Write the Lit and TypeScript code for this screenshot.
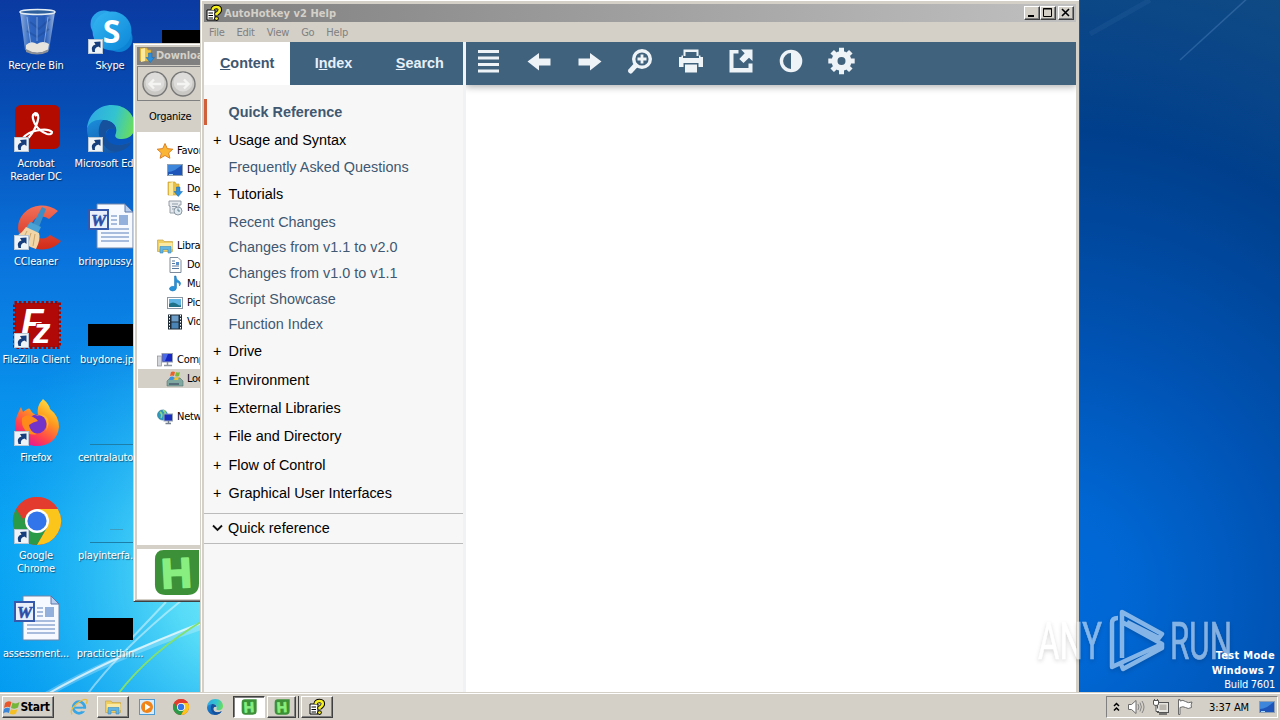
import { html, svg, css, LitElement, nothing } from 'lit'
import { customElement, property } from 'lit/decorators.js'
import { classMap } from 'lit/directives/class-map.js'

const shared = css`
  * {
    box-sizing: border-box;
  }

  svg {
    display: block;
    flex: none;
  }

  .ui {
    font-family: "DejaVu Sans Condensed", "DejaVu Sans", sans-serif;
    font-stretch: condensed;
    font-size: 11px;
    line-height: 13px;
    letter-spacing: -0.25px;
    white-space: nowrap;
  }
`

// ---------- icon artwork ----------

const ahk = svg`
  <path d="M11 1H47V35Q47 47 35 47H13Q2 47 2 36V11Q2 1 11 1Z" fill="#3c9038"/>
  <text x="24" y="39.5" text-anchor="middle" font-family="Liberation Sans, sans-serif" font-weight="bold"
    font-size="43" fill="#88ee80" stroke="#88ee80" stroke-width="2" stroke-linejoin="round" transform="rotate(-3 24 24)">H</text>`

const chrome = svg`
  <circle cx="24" cy="24" r="24" fill="#e33b2e"/>
  <path d="M3.2 12A24 24 0 0 0 24 48L34.4 30L24 24Z" fill="#2a9a48"/>
  <path d="M24 48A24 24 0 0 0 44.8 12H24L34.4 30Z" fill="#fcc51c"/>
  <path d="M3.2 12L13.6 30L24 24V12Z" fill="#e33b2e"/>
  <path d="M3.2 12L13.6 30L18 24L10 12Z" fill="#2a9a48"/>
  <path d="M3.2 12A24 24 0 0 1 44.8 12H24Q16 13 13 20L10 22Z" fill="#e33b2e"/>
  <circle cx="24" cy="24" r="12" fill="#fff"/>
  <circle cx="24" cy="24" r="9.6" fill="#3274ea"/>`

const edge = svg`
  <defs>
    <linearGradient id="eg" x1="0" y1="0.3" x2="1" y2="0.5">
      <stop offset="0" stop-color="#2fa9e4"/><stop offset=".55" stop-color="#32c3d0"/><stop offset="1" stop-color="#69dd5e"/>
    </linearGradient>
    <linearGradient id="eb" x1="0" y1="0" x2="0.6" y2="1">
      <stop offset="0" stop-color="#1b8fdc"/><stop offset="1" stop-color="#1456a8"/>
    </linearGradient>
  </defs>
  <path d="M0 24C1 10 11 0 25 0C40 0 48 11 48 21C48 30 41 34 35 34C29 34 27 32 29 28C31 20 24 15 16 15C8 15 2 19 0 24Z" fill="url(#eg)"/>
  <path d="M0 24C2 17 9 14 16 15C23 16 28 20 28 24C22 21 18 27 19 32C20 40 32 44 44 36C40 44 32 48 24 48C10 48 0 38 0 24Z" fill="url(#eb)"/>
  <path d="M16 15C9 22 10 38 24 46C36 48 42 42 44 37C32 43 20 40 19 31C18 25 22 22 28 24C28 18 22 15 16 15Z" fill="#15519c"/>`

const word = svg`
  <path d="M10 1H38L46 9V45H10Z" fill="#f6f9ff" stroke="#7386a8" stroke-width="1"/>
  <path d="M38 1V9H46Z" fill="#b9cdec" stroke="#5a76aa" stroke-width="1"/>
  <path d="M24 13H30M24 17H30M24 21H30M14 26H42M14 30H42M14 34H42M14 38H42" stroke="#8ea9d2" stroke-width="1.3"/>
  <rect x="32" y="12" width="9" height="10" fill="#93afdb"/>
  <rect x="2" y="7" width="19" height="19" fill="#e9f0fc" stroke="#3659ab" stroke-width="2"/>
  <text x="11.500" y="22.500" text-anchor="middle" font-family="Liberation Serif, serif" font-weight="bold"
    font-style="italic" font-size="17" fill="#2c4fa6" stroke="#2c4fa6" stroke-width=".6">W</text>`

const help = svg`
  <path d="M1 5H9V15H1Z" fill="#fff" stroke="#000"/>
  <path d="M2.500 8H7M2.500 10.500H7M2.500 13H7" stroke="#000"/>
  <path d="M6.500 5Q7 1.800 10.500 1.800Q14 2 14 4.800Q14 7 10.500 9V10.500" fill="none" stroke="#000" stroke-width="4.200"/>
  <circle cx="10.500" cy="13.600" r="2.300" fill="#000"/>
  <path d="M6.500 5Q7 2 10.500 2Q13.800 2 13.800 4.800Q13.800 7 10.500 8.800V10.300" fill="none" stroke="#f6f01c" stroke-width="2.500"/>
  <circle cx="10.500" cy="13.600" r="1.400" fill="#f6f01c"/>`

const folder = svg`
  <path d="M1 1H8L9 3H12V14H1Z" fill="#e9bf45" stroke="#c39a2e" stroke-width=".6"/>
  <path d="M2 2L6 1V14L2 15Z" fill="#fbe9a0"/>`

const downloads = svg`${folder}
  <path d="M9.500 6H13V10.500H15.500L11.300 15.500L7 10.500H9.500Z" fill="#2b8fe0" stroke="#1566b4" stroke-width=".5"/>`

const library = svg`
  <path d="M.5 2H6L7 3.500H15.500V13.500H.5Z" fill="#f0cf62" stroke="#c8a347" stroke-width=".7"/>
  <path d="M2 5H15.500V11H2Z" fill="#f9e9a4"/>
  <path d="M3 15V8.500H14V15H11V11.500H6V15Z" fill="#63b4e0" stroke="#3b8cc0" stroke-width=".6"/>`

const monitor = svg`
  <rect x=".5" y="2.500" width="15" height="11" fill="#1d55b8" stroke="#8fa0b4"/>
  <path d="M1 3H15L8 8Q4 10 1 10Z" fill="#3d86dc"/>
  <path d="M2 12.500H6" stroke="#a9d8ff"/>`

const glyphs: Record<string, unknown> = {
  ahk,
  chrome,
  edge,
  word,
  help,
  downloads,
  library,
  monitor,
  recycle: svg`
    <defs>
      <linearGradient id="rb" x1="0" x2="1" y1="0" y2="0">
        <stop offset="0" stop-color="#b8cfe8" stop-opacity=".8"/><stop offset=".3" stop-color="#4f86d6" stop-opacity=".55"/>
        <stop offset=".7" stop-color="#3c70c4" stop-opacity=".55"/><stop offset="1" stop-color="#c4d8ee" stop-opacity=".8"/>
      </linearGradient>
    </defs>
    <path d="M7 5L12 43Q24 49 36 43L42 5Z" fill="url(#rb)"/>
    <path d="M13 38Q18 33 24 37Q30 33 36 37L35 43Q24 49 13 43Z" fill="#e7e4de"/>
    <path d="M13 42Q24 49 36 42L35 45Q24 50 13 45Z" fill="#8b8f96"/>
    <path d="M17 15L26 22L37 12M14 24L24 30L36 22" stroke="#1c4a96" stroke-width="2" fill="none" opacity=".45"/>
    <path d="M14 10L18 38M24 10V34M35 10L31 38" stroke="#cfe0f4" stroke-width="1" opacity=".5"/>
    <ellipse cx="24.500" cy="5" rx="17.500" ry="2.500" fill="#2e5f9d" stroke="#e4ecf4" stroke-width="1.600"/>`,
  skype: svg`
    <defs>
      <linearGradient id="sk" x1="0" y1="0" x2="1" y2="1">
        <stop offset="0" stop-color="#36b6f2"/><stop offset="1" stop-color="#0b86d8"/>
      </linearGradient>
    </defs>
    <circle cx="17" cy="17" r="13.500" fill="#2aa5ea"/>
    <circle cx="32" cy="31.500" r="13.500" fill="#0c83d4"/>
    <circle cx="25" cy="24" r="19.500" fill="url(#sk)"/>
    <text x="24.500" y="35.500" text-anchor="middle" font-family="Open Sans, sans-serif" font-weight="bold"
      font-size="32" fill="#fff">S</text>`,
  acrobat: svg`
    <rect x="2" y="0" width="45" height="44" rx="6" fill="#b30b00"/>
    <path d="M23 11Q20 7 24 8.500Q27 11 23 21Q19 30 14 34Q8 38 10 33Q15 27 24 25.500Q35 23 39 27Q39 30 34 29Q26 26 22 19Q19 13 20 10Q22 7 24 11"
      fill="none" stroke="#fff" stroke-width="2.200"/>`,
  ccleaner: svg`
    <defs>
      <linearGradient id="cc" x1="0" y1="0" x2="0" y2="1">
        <stop offset="0" stop-color="#f2705a"/><stop offset="1" stop-color="#d12a18"/>
      </linearGradient>
    </defs>
    <path d="M45 8A24 22 0 1 0 48 38L37 32A11 11 0 1 1 36 16Z" fill="url(#cc)"/>
    <path d="M29 4L33 6L26 24L20 21Z" fill="#3c8fc6"/>
    <path d="M17 19L28 24L25 30L13 25Z" fill="#4aa3d4"/>
    <path d="M13 24L26 30Q28 36 23 46Q14 44 4 33Q9 30 13 24Z" fill="#f0d6a8"/>
    <path d="M14 28L10 36M18 30L15 40M22 31L20 43" stroke="#c9a468" stroke-width="1"/>`,
  filezilla: svg`
    <rect x="2" y="2" width="44" height="44" fill="#b00908"/>
    <rect x="1.500" y="1.500" width="45" height="45" fill="none" stroke="#9a0808" stroke-width="3" stroke-dasharray="2.500 2"/>
    <text x="8" y="34" font-family="Liberation Sans, sans-serif" font-weight="bold" font-style="italic"
      font-size="37" fill="#fff">F</text>
    <text x="20" y="42" font-family="Liberation Sans, sans-serif" font-weight="bold" font-style="italic"
      font-size="35" fill="#fff" stroke="#b00908" stroke-width="2" paint-order="stroke">z</text>`,
  firefox: svg`
    <defs>
      <linearGradient id="ff" x1="0.9" y1="0" x2="0.3" y2="1">
        <stop offset="0" stop-color="#fff04a"/><stop offset=".4" stop-color="#ff9a1e"/>
        <stop offset=".75" stop-color="#ff3f50"/><stop offset="1" stop-color="#e2159c"/>
      </linearGradient>
    </defs>
    <path d="M30 0Q36 5 37 10Q46 17 46 28C45 40 36 47 24 47C11 47 1 38 2 25Q3 17 8 8L10 13Q16 8 17 10Q19 15 25 17Q23 7 30 0Z" fill="url(#ff)"/>
    <circle cx="24" cy="25" r="9.500" fill="#7433c8"/>
    <path d="M9 19Q14 14 20 18Q24 20 25 22Q20 23 16 26Q17 33 24 35Q16 37 12 31Q8 26 9 19Z" fill="#ff8a1c"/>
    <path d="M22 17Q32 14 34 24Q35 30 31 34Q37 28 35 20Q31 13 22 17Z" fill="#ffb52e"/>`,
  black: svg`<rect x="1" y="23" width="45" height="22" fill="#000"/>`,
  line: svg`<path d="M3 45.500H48" stroke="#1d7fa8"/>`,
  lines: svg`<path d="M3 45.500H48" stroke="#1d7fa8"/><path d="M23 32.500H36" stroke="#3f9dc0"/>`,
  star: svg`<path d="M8 .5L10.300 5.600L15.800 6.200L11.700 9.900L12.900 15.300L8 12.500L3.100 15.300L4.300 9.900L.2 6.200L5.700 5.600Z" fill="#fbb535" stroke="#d9791b" stroke-width=".9"/>`,
  recent: svg`<path d="M2 1H14V5H12V13H3V6H2Z" fill="#e6eaee" stroke="#8a949e" stroke-width=".9"/>
    <path d="M5 4H11M5 6.500H10M5 9H10" stroke="#8d99a6"/><circle cx="11" cy="11" r="4" fill="#dfe9f0" stroke="#8c98a4"/>
    <path d="M11 8.500V11H13" stroke="#5d7f8e" fill="none"/>`,
  document: svg`<path d="M3 .5H11L14 3.500V15.500H3Z" fill="#fff" stroke="#7e8b9b"/>
    <path d="M5 4H8M5 6.500H8M5 9H12M5 11.500H12" stroke="#56789f"/><rect x="9" y="5" width="3" height="3" fill="#5b8fcb"/>`,
  music: svg`<path d="M9 0Q9 4 12 5Q15 7 12.500 10Q13 6.500 9.500 6V12Q9 15 5.500 15Q2 14.500 2.500 12Q4 9.500 7.500 10.500V0Z" fill="#2491d8" stroke="#1570b4" stroke-width=".5"/>`,
  picture: svg`<rect x=".5" y="2.500" width="15" height="11" fill="#fff" stroke="#8b97a5"/>
    <rect x="2" y="4" width="12" height="8" fill="#5fb4e4"/><path d="M2 9Q6 6 10 9T14 9V12H2Z" fill="#1f7287"/>`,
  video: svg`<rect x="1" y=".5" width="14" height="15" fill="#1f2c38"/>
    <path d="M2.500 1V15M13.500 1V15" stroke="#fff" stroke-dasharray="1.500 1.500"/>
    <rect x="4.500" y="1.500" width="7" height="6" fill="#6c9cc8"/><rect x="4.500" y="8.500" width="7" height="6" fill="#4a83b6"/>`,
  computer: svg`<rect x=".5" y="4" width="4" height="10" fill="#d3d6da" stroke="#8b8f96" stroke-width=".7"/>
    <rect x="5" y="1.500" width="10.500" height="8.500" fill="#1728c4" stroke="#98a2b2"/><path d="M6 2H11L8 9H6Z" fill="#4a6ae8"/>
    <path d="M7 13.500H15M10.500 10V13" stroke="#8d959f" stroke-width="1.500"/>`,
  disk: svg`<path d="M0 10L3 7H13L16 10V15H0Z" fill="#7fa9a0" stroke="#55726e" stroke-width=".6"/>
    <path d="M2 13H12" stroke="#335"/><path d="M4 1Q6 0 8 1L7 5Q5 4 3 5Z" fill="#e8622a"/>
    <path d="M9 1Q11 2 13 1L12 5Q10 6 8 5Z" fill="#7ab93a"/><path d="M3 6Q5 5 7 6L6 9H2Z" fill="#3c90e0"/>
    <path d="M8 6Q10 7 12 6L11 9H7Z" fill="#f4c42c"/>`,
  network: svg`<circle cx="5.500" cy="6" r="5" fill="#2f9ac0" stroke="#247295" stroke-width=".6"/>
    <path d="M3 3Q6 5 4 9M6 1Q9 3 8 6" stroke="#8fd67a" stroke-width="1.600" fill="none"/>
    <rect x="7" y="5" width="8.500" height="7" fill="#1a2fc0" stroke="#97a3b4"/><path d="M8.500 14.500H14M11.500 12V14" stroke="#76818f" stroke-width="1.400"/>`,
  ie: svg`<circle cx="8" cy="8.500" r="5.800" fill="none" stroke="#37a6e6" stroke-width="2.800"/>
    <path d="M3.500 8.700H14" stroke="#37a6e6" stroke-width="2"/><path d="M11 9.800H16V12.300H10.500Z" fill="#d4d0c8"/>
    <path d="M1 15.500Q-2 11.500 5.500 5Q13 -1 15.800 .8Q16.800 2 15 5" fill="none" stroke="#e9bd3c" stroke-width="1.300"/>`,
  wmp: svg`<rect x=".5" y=".5" width="15" height="15" fill="#d8ecfb" stroke="#4e9bd4"/>
    <circle cx="8" cy="8" r="6" fill="#f08418"/><path d="M6 4.500L11.500 8L6 11.500Z" fill="#fff"/>`,
  flag: svg`<path d="M1 4Q4 1 7.500 3L6 8.500Q3.500 7 0 9Z" fill="#e8562a"/><path d="M8.500 3.500Q12 5.500 15.500 3L14 8.500Q11 10.500 7 9Z" fill="#74b63a"/>
    <path d="M0 10Q3 8 6 9.500L5 14Q2 12.500 -1 14.500Z" fill="#3c86d8"/><path d="M7 10Q10 12 13.500 10L12 14.500Q9 16.500 5.500 14.500Z" fill="#f5bf26"/>`
}

@customElement('app-icon')
export class AppIcon extends LitElement {
  static styles = css`
    :host {
      display: block;
      flex: none;
    }

    svg {
      display: block;
      overflow: visible;
    }
  `

  @property() name = ''
  @property({ type: Number }) size = 16
  @property({ type: Number }) box = 16

  render () {
    return html`<svg width=${this.size} height=${this.size} viewBox="0 0 ${this.box} ${this.box}">${glyphs[this.name]}</svg>`
  }
}

// ---------- desktop shortcuts ----------

interface Shortcut {
  icon: string
  label: string
  link?: boolean
}

const shortcuts: Shortcut[] = [
  { icon: 'recycle', label: 'Recycle Bin' },
  { icon: 'acrobat', label: 'Acrobat\nReader DC', link: true },
  { icon: 'ccleaner', label: 'CCleaner', link: true },
  { icon: 'filezilla', label: 'FileZilla Client', link: true },
  { icon: 'firefox', label: 'Firefox', link: true },
  { icon: 'chrome', label: 'Google\nChrome', link: true },
  { icon: 'word', label: 'assessment...' },
  { icon: 'skype', label: 'Skype', link: true },
  { icon: 'edge', label: 'Microsoft Edge', link: true },
  { icon: 'word', label: 'bringpussy....' },
  { icon: 'black', label: 'buydone.jpg' },
  { icon: 'line', label: 'centralauto...' },
  { icon: 'lines', label: 'playinterfa....' },
  { icon: 'black', label: 'practicethin...' },
  { icon: 'black', label: '' }
]

@customElement('desktop-icon')
export class DesktopIcon extends LitElement {
  static styles = [shared, css`
    :host {
      display: flex;
      flex-direction: column;
      align-items: center;
    }

    .pic {
      position: relative;
      margin-left: 2px;
    }

    .arrow {
      position: absolute;
      left: 1px;
      bottom: 1px;
    }

    .label {
      margin-top: 4px;
      color: #fff;
      text-align: center;
      white-space: pre;
      letter-spacing: -0.15px;
      text-shadow: 1px 1px 1px rgb(0 0 0 / 50%);
    }
  `]

  @property({ attribute: false }) item!: Shortcut

  render () {
    const { icon, label, link } = this.item
    return html`
      <div class="pic">
        <app-icon name=${icon} size="48" box="48"></app-icon>
        ${link
          ? html`<svg class="arrow" width="15" height="15" viewBox="0 0 15 15">
              <rect x=".5" y=".5" width="14" height="14" fill="#eef3f8" stroke="#b9c6d4"/>
              <path d="M4.500 13Q2 7 7.500 5.500L6 3L12.500 2.500V9L10.500 7.500Q6 8.500 7 13Z" fill="#173e7c"/>
            </svg>`
          : nothing}
      </div>
      <div class="ui label">${label}</div>
    `
  }
}

// ---------- explorer window, mostly hidden behind the help window ----------

const places = [
  [['star', 'Favorites'], ['monitor', 'Desktop'], ['downloads', 'Downloads'], ['recent', 'Recent Places']],
  [['library', 'Libraries'], ['document', 'Documents'], ['music', 'Music'], ['picture', 'Pictures'], ['video', 'Videos']],
  [['computer', 'Computer'], ['disk', 'Local Disk (C:)']],
  [['network', 'Network']]
]

@customElement('explorer-window')
export class ExplorerWindow extends LitElement {
  static styles = [shared, css`
    :host {
      display: flex;
      flex-direction: column;
      overflow: hidden;
      background: #d4d0c8;
      border: 1px solid #d4d0c8;
      border-bottom-color: #404040;
      box-shadow: inset 1px 1px #fff, inset 0 -1px #808080;
      padding: 3px 0 2px 3px;
    }

    .title {
      display: flex;
      align-items: center;
      gap: 1px;
      height: 18px;
      padding: 0 0 2px 2px;
      background: #808080;
      color: #d4d0c8;
      font-weight: bold;
      letter-spacing: -0.1px;
    }

    .nav {
      display: flex;
      align-items: center;
      gap: 2px;
      height: 35px;
      margin-top: 1px;
      padding-left: 4px;
      border: 1px solid #808080;
      border-right: 0;
    }

    .organize {
      height: 31px;
      padding: 9px 12px;
    }

    .tree {
      height: 413px;
      padding-top: 9px;
      background: #fff;
    }

    .group {
      margin-bottom: 19px;
    }

    .row {
      display: flex;
      align-items: center;
      gap: 4px;
      height: 19px;
      padding-left: 30px;
    }

    .row:first-child {
      padding-left: 20px;
    }

    .row.selected {
      background: #d4d0c8;
      margin-left: 1px;
      padding-left: 29px;
    }

    .details {
      flex: 1;
      margin-top: 4px;
      padding: 0 0 0 16px;
      background: #fff;
    }
  `]

  arrow (flip: boolean) {
    return html`<svg width="26" height="26" viewBox="0 0 26 26">
      <circle cx="13" cy="13" r="12" fill="#c9c8c5" stroke="#777" stroke-width="1.4"/>
      <circle cx="13" cy="11" r="9.500" fill="#dddcda"/>
      <path d=${flip ? 'M7 13H18M14 8.500L18.500 13L14 17.500' : 'M19 13H8M12 8.500L7.500 13L12 17.500'} fill="none" stroke="#f4f4f2" stroke-width="2.400"/>
    </svg>`
  }

  render () {
    return html`
      <div class="ui title"><app-icon name="downloads"></app-icon>Downloads</div>
      <div class="nav">${this.arrow(false)}${this.arrow(true)}</div>
      <div class="ui organize">Organize</div>
      <div class="tree">
        ${places.map(group => html`
          <div class="group">
            ${group.map(([icon, name]) => html`
              <div class="ui row ${classMap({ selected: icon === 'disk' })}">
                <app-icon name=${icon}></app-icon>${name}
              </div>`)}
          </div>`)}
      </div>
      <div class="details"><app-icon name="ahk" size="47" box="48"></app-icon></div>
    `
  }
}

// ---------- AutoHotkey help ----------

const contents: { text: string, kind: string }[] = [
  { text: 'Quick Reference', kind: 'current' },
  { text: 'Usage and Syntax', kind: 'book' },
  { text: 'Frequently Asked Questions', kind: 'page' },
  { text: 'Tutorials', kind: 'book' },
  { text: 'Recent Changes', kind: 'page' },
  { text: 'Changes from v1.1 to v2.0', kind: 'page' },
  { text: 'Changes from v1.0 to v1.1', kind: 'page' },
  { text: 'Script Showcase', kind: 'page' },
  { text: 'Function Index', kind: 'page' },
  { text: 'Drive', kind: 'book' },
  { text: 'Environment', kind: 'book' },
  { text: 'External Libraries', kind: 'book' },
  { text: 'File and Directory', kind: 'book' },
  { text: 'Flow of Control', kind: 'book' },
  { text: 'Graphical User Interfaces', kind: 'book' }
]

// each drawn on a 28x28 box
const tools = [
  svg`<path d="M3 4.500H24M3 11H24M3 17.500H24M3 24H24" stroke="#eef3f8" stroke-width="3"/>`,
  svg`<path d="M2.500 14.500L14 6V11.500H25.500V18.500H14V23.500Z"/>`,
  svg`<path d="M25.500 14.500L14 6V11.500H2.500V18.500H14V23.500Z"/>`,
  svg`<circle cx="16" cy="12" r="8.300" fill="none" stroke="#eef3f8" stroke-width="3.400"/>
      <path d="M9.500 18.500L4.500 24" stroke="#eef3f8" stroke-width="5" stroke-linecap="round"/>
      <path d="M16 7.500V16.500M11.500 12H20.500" stroke="#eef3f8" stroke-width="2.800"/>`,
  svg`<path d="M6.500 2.500H21.500V9H19.500V5H8.500V9H6.500Z"/>
      <path d="M2 10H4.500V8.500H6V11H22V8.500H23.500V10H26V20H21.500V16H6.500V20H2Z"/>
      <path d="M8 17.500H20V25.500H8Z"/>`,
  svg`<path d="M2.500 3H11.500V6.500H6.500V21H21.500V16.500H25.500V25.500H2.500Z"/>
      <path d="M14 2.500H25.500V14L22 10.700L16.500 16L12.300 12L17.700 6.300Z"/>`,
  svg`<circle cx="14" cy="14" r="9.600" fill="none" stroke="#eef3f8" stroke-width="3.400"/><path d="M14 4.500A9.500 9.500 0 0 1 14 23.500Z" />`,
  svg`<circle cx="13.500" cy="14" r="7" fill="none" stroke="#eef3f8" stroke-width="6"/>
      <g stroke="#eef3f8" stroke-width="5">
        <path d="M13.500 .8V5M13.500 23V27.200M.3 14H4.500M22.500 14H26.700M4.200 4.700L7.100 7.600M19.900 20.400L22.800 23.300M4.200 23.300L7.100 20.400M19.900 7.600L22.800 4.700"/>
      </g>`
]

@customElement('help-window')
export class HelpWindow extends LitElement {
  static styles = [shared, css`
    :host {
      display: flex;
      flex-direction: column;
      overflow: hidden;
      background: #d4d0c8;
      border-left: 1px solid #d4d0c8;
      border-right: 1px solid #505048;
      box-shadow: inset 1px 1px #fff;
      padding: 4px 3px 0 3px;
    }

    .title {
      display: flex;
      align-items: center;
      height: 18px;
      padding: 0 2px 0 2px;
      background: linear-gradient(90deg, #808080, #c0c0c0);
      color: #d4d0c8;
      font-weight: bold;
      letter-spacing: 0.05px;
    }

    .title span {
      flex: 1;
      padding-left: 2px;
    }

    .sys {
      width: 16px;
      height: 14px;
      background: #d4d0c8;
      border: 1px solid;
      border-color: #fff #404040 #404040 #fff;
      box-shadow: inset -1px -1px #808080;
    }

    .sys.close {
      margin-left: 2px;
    }

    .menu {
      display: flex;
      gap: 12px;
      height: 20px;
      padding: 4px 5px;
      color: #808080;
    }

    .body {
      display: flex;
      flex: 1;
      background: #f0f2f3;
    }

    .side {
      width: 259px;
      background: #f7f7f7;
      font: 14.42px/20px "Liberation Sans", Arial, sans-serif;
    }

    .tabs {
      display: flex;
      height: 43px;
      background: #3f627f;
      color: #e6f0fa;
      font-weight: bold;
      line-height: 43px;
      text-align: center;
    }

    .tab {
      flex: 1;
    }

    .tab.active {
      background: #fff;
      color: #3f5770;
    }

    .toc {
      height: 429px;
      padding-top: 12.8px;
      border-bottom: 1px solid #bbb;
    }

    .entry {
      display: flex;
      align-items: center;
      height: 25.7px;
      color: #405871;
    }

    .entry::before {
      content: "";
      width: 24.5px;
      padding-left: 9px;
      box-sizing: border-box;
    }

    .book,
    .current {
      height: 28.4px;
    }

    .book {
      color: #000;
    }

    .book::before {
      content: "+";
    }

    .current {
      font-weight: bold;
      background: linear-gradient(#d0603a, #d0603a) 0 50% / 3px 26px no-repeat;
    }

    .quick {
      display: flex;
      align-items: center;
      gap: 5px;
      height: 30px;
      padding: 0 0 2px 8px;
      border-bottom: 1px solid #bbb;
    }

    .main {
      flex: 1;
      margin-left: 3px;
      background: #fff;
    }

    .tools {
      display: flex;
      gap: 22.4px;
      height: 43px;
      padding: 5px 9px;
      background: #41627d;
      box-shadow: 0 2px 7px rgb(0 0 0 / 30%);
      fill: #eef3f8;
    }

    .clip {
      height: 80px;
      overflow: hidden;
    }
  `]

  render () {
    return html`
      <div class="ui title">
        <app-icon name="help"></app-icon>
        <span>AutoHotkey v2 Help</span>
        <svg class="sys" viewBox="0 0 14 12"><path d="M3 9H9" stroke="#000" stroke-width="2"/></svg>
        <svg class="sys" viewBox="0 0 14 12"><path d="M2.500 1.500H10.500V9.500H2.500ZM2 2H11" fill="none" stroke="#000"/></svg>
        <svg class="sys close" viewBox="0 0 14 12"><path d="M3 2L10 9M10 2L3 9" stroke="#000" stroke-width="1.600"/></svg>
      </div>
      <div class="ui menu">${['File', 'Edit', 'View', 'Go', 'Help'].map(m => html`<span>${m}</span>`)}</div>
      <div class="body">
        <div class="side">
          <div class="tabs">
            <div class="tab active"><u>C</u>ontent</div>
            <div class="tab">I<u>n</u>dex</div>
            <div class="tab"><u>S</u>earch</div>
          </div>
          <div class="toc">
            ${contents.map(c => html`<div class="entry ${c.kind}">${c.text}</div>`)}
          </div>
          <div class="quick">
            <svg width="11" height="8" viewBox="0 0 11 8"><path d="M1 1.500L5.500 6L10 1.500" fill="none" stroke="#111" stroke-width="1.800"/></svg>
            Quick reference
          </div>
        </div>
        <div class="main">
          <div class="clip">
            <div class="tools">${tools.map(t => html`<svg width="28" height="28" viewBox="0 0 28 28">${t}</svg>`)}</div>
          </div>
        </div>
      </div>
    `
  }
}

// ---------- taskbar ----------

const tasks = [
  { icon: 'ie', box: 16, look: 'flat' },
  { icon: 'library', box: 16, look: 'raised' },
  { icon: 'wmp', box: 16, look: 'flat' },
  { icon: 'chrome', box: 48, look: 'flat' },
  { icon: 'edge', box: 48, look: 'flat' },
  { icon: 'ahk', box: 48, look: 'pressed' },
  { icon: 'ahk', box: 48, look: 'raised stacked' },
  { icon: 'help', box: 16, look: 'raised' }
]

@customElement('task-bar')
export class TaskBar extends LitElement {
  static styles = [shared, css`
    :host {
      display: flex;
      align-items: center;
      height: 28px;
      padding: 2px 2px 0;
      background: #d4d0c8;
      box-shadow: inset 0 1px #d4d0c8, inset 0 2px #fff;
    }

    .start,
    .task {
      display: flex;
      align-items: center;
      justify-content: center;
      height: 22px;
      border: 1px solid transparent;
    }

    .start {
      width: 52px;
      margin-right: 9px;
      padding-right: 2px;
      font-weight: bold;
      font-size: 12px;
      letter-spacing: -0.3px;
    }

    .task {
      width: 32px;
      margin-right: 2px;
    }

    .start,
    .raised {
      border-color: #fff #404040 #404040 #fff;
      box-shadow: inset -1px -1px #808080;
    }

    .pressed {
      background: #fff;
      border-color: #404040 #fff #fff #404040;
      box-shadow: inset 1px 1px #808080;
    }

    .stacked {
      width: 29px;
      margin-right: 5px;
      box-shadow: inset -1px -1px #808080, 2px 0 #d4d0c8, 3px 0 #404040;
    }

    .tray {
      display: flex;
      align-items: center;
      gap: 8px;
      height: 22px;
      margin-left: auto;
      padding: 0 2px 0 6px;
      border: 1px solid;
      border-color: #808080 #fff #fff #808080;
    }

    .clock {
      margin: 0 2px 0 8px;
      letter-spacing: -0.1px;
    }
  `]

  render () {
    return html`
      <div class="ui start"><app-icon name="flag"></app-icon>Start</div>
      ${tasks.map(t => html`
        <div class="task ${t.look}"><app-icon name=${t.icon} box=${t.box}></app-icon></div>`)}
      <div class="tray">
        <svg width="7" height="11" viewBox="0 0 7 11"><path d="M1 4L3.500 1.500L6 4M1 8.500L3.500 6L6 8.500" fill="none" stroke="#000" stroke-width="1.500"/></svg>
        <svg width="17" height="16" viewBox="0 0 17 16">
          <path d="M.5 5.500H3.500L8 1.500V14.500L3.500 10.500H.5Z" fill="#fff" stroke="#6b6b6b"/>
          <path d="M10 5Q11.800 8 10 11M12 3.500Q14.800 8 12 12.500M14 2Q18 8 14 14" fill="none" stroke="#858585"/>
        </svg>
        <svg width="16" height="16" viewBox="0 0 16 16">
          <rect x="4.500" y="3.500" width="11" height="10" fill="#e6e4df" stroke="#555"/>
          <rect x="6.500" y="5.500" width="7" height="5.500" fill="#b9b6b0"/>
          <path d="M6 15H14" stroke="#555" stroke-width="1.500"/>
          <path d="M.5 1.500H5.500V5Q5.500 6.500 3 6.500Q.5 6.500 .5 5ZM3 6.500V12.500H6M1.500 0V2M4.500 0V2" fill="#fff" stroke="#555"/>
        </svg>
        <svg width="16" height="16" viewBox="0 0 16 16">
          <path d="M1.500 15.500V.5H3V2Q6 .5 8.500 2.500Q11 4.500 15 3Q13.500 6 14.500 8.500Q11 10.500 8.500 8.500Q6 7 3 8.500V15.500Z" fill="#fff" stroke="#6b6b6b"/>
        </svg>
        <span class="ui clock">3:37 AM</span>
        <app-icon name="monitor"></app-icon>
      </div>
    `
  }
}

@customElement('app-root')
export class AppRoot extends LitElement {
  static styles = [shared, css`
    :host {
      display: block;
      position: relative;
      width: 1280px;
      height: 720px;
      overflow: hidden;
      background: #0058c0;
    }

    .wallpaper {
      position: absolute;
      inset: 0;
    }

    .shortcuts {
      position: absolute;
      left: -1px;
      top: 7px;
      display: grid;
      grid-auto-flow: column;
      grid-template-rows: repeat(7, 98px);
      grid-auto-columns: 74px;
    }

    explorer-window {
      position: absolute;
      left: 133px;
      top: 43px;
      width: 300px;
      height: 559px;
    }

    help-window {
      position: absolute;
      left: 200px;
      top: 0;
      width: 880px;
      height: 692px;
    }

    .build {
      position: absolute;
      right: 5px;
      top: 649px;
      color: #fff;
      text-align: right;
      line-height: 14.500px;
    }

    .build b {
      letter-spacing: 0.3px;
    }

    .watermark {
      position: absolute;
      left: 1030px;
      top: 600px;
      overflow: visible;
      filter: drop-shadow(0 2px 2px rgb(0 0 0 / 30%));
    }

    task-bar {
      position: absolute;
      left: 0;
      right: 0;
      bottom: 0;
    }
  `]

  render () {
    return html`
      <svg class="wallpaper" width="1280" height="720" viewBox="0 0 1280 720">
        <defs>
          <linearGradient id="left" x1="0" y1="0" x2="0" y2="1">
            <stop offset="0" stop-color="#0a3aa2"/>
            <stop offset=".15" stop-color="#064db4"/>
            <stop offset=".35" stop-color="#0a72dc"/>
            <stop offset=".55" stop-color="#0890ec"/>
            <stop offset=".75" stop-color="#04a2f4"/>
            <stop offset="1" stop-color="#0098f0"/>
          </linearGradient>
          <radialGradient id="glow" gradientUnits="userSpaceOnUse" cx="260" cy="580" r="300">
            <stop offset="0" stop-color="#8af2fa"/>
            <stop offset=".3" stop-color="#62e4f8" stop-opacity=".85"/>
            <stop offset="1" stop-color="#20b0f4" stop-opacity="0"/>
          </radialGradient>
          <radialGradient id="right" gradientUnits="userSpaceOnUse" cx="1040" cy="590" r="640">
            <stop offset="0" stop-color="#006cdc"/>
            <stop offset=".15" stop-color="#0066d2"/>
            <stop offset=".4" stop-color="#0052b2"/>
            <stop offset=".72" stop-color="#003f8c"/>
            <stop offset="1" stop-color="#104a84"/>
          </radialGradient>
        </defs>
        <rect width="640" height="720" fill="url(#left)"/>
        <rect width="640" height="720" fill="url(#glow)"/>
        <rect x="640" width="640" height="720" fill="url(#right)"/>
        <path d="M1180 60L1250 -4" stroke="#5f92c8" stroke-opacity=".35" stroke-width="1.500"/>
        <path d="M1090 34L1150 0" stroke="#5f92c8" stroke-opacity=".1" stroke-width="5"/>
        <g fill="none">
          <path d="M44 696Q110 658 204 626" stroke="#fff" stroke-opacity=".25" stroke-width="6"/>
          <path d="M44 696Q110 658 204 622" stroke="#fff" stroke-opacity=".7" stroke-width="2"/>
          <path d="M86 696Q120 650 182 600M130 640L166 602" stroke="#fff" stroke-opacity=".45" stroke-width="2"/>
          <path d="M118 694Q150 652 204 620" stroke="#82e070" stroke-width="2"/>
        </g>
      </svg>
      <div class="shortcuts">
        ${shortcuts.map(s => html`<desktop-icon .item=${s}></desktop-icon>`)}
      </div>
      <explorer-window></explorer-window>
      <help-window></help-window>
      <svg class="watermark" width="210" height="80" viewBox="0 0 210 80" opacity=".52">
        <g fill="#fff" stroke="#fff" stroke-width=".7" font-family="Roboto, sans-serif" font-size="51">
          <text x="8" y="59" textLength="64" lengthAdjust="spacingAndGlyphs">ANY</text>
          <text x="140" y="59" textLength="62" lengthAdjust="spacingAndGlyphs">RUN</text>
        </g>
        <g fill="none" stroke="#fff" stroke-width="4.500" stroke-linejoin="round">
          <path d="M88 18Q82 18 82 23V67L97 60L132 44L92 22V58M92 22V12L132 34L129 38L97 22M132 44L132 48L93 69L91 64"/>
        </g>
      </svg>
      <div class="ui build"><b>Test Mode</b><br><b>Windows 7</b><br>Build 7601</div>
      <task-bar></task-bar>
    `
  }
}
